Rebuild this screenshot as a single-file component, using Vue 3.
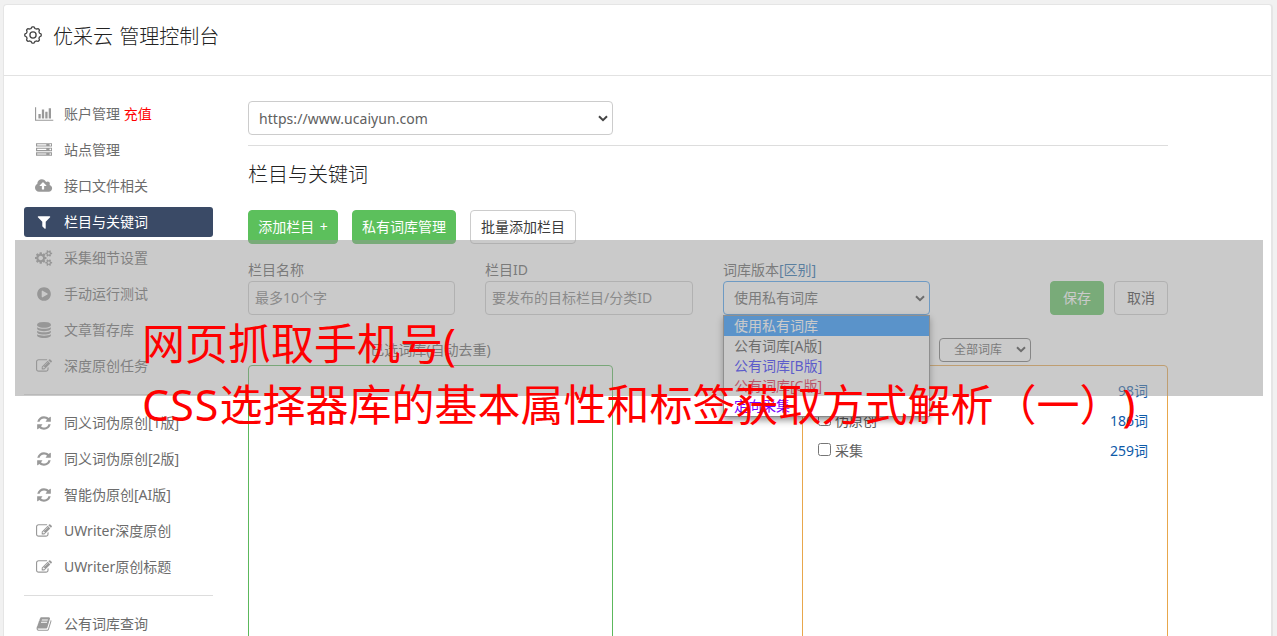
<script setup>
const icons = {
  chart: { w: 2048, d: 'M640 896v512h-256v-512h256zm384-512v1024h-256v-1024h256zm1024 1152v128h-2048v-1536h128v1408h1920zm-640-896v768h-256v-768h256zm384-384v1152h-256v-1152h256z' },
  server: { w: 1792, d: 'M128 1408h1024v-128h-1024v128zm0-512h1024v-128h-1024v128zm1568 448q0-40-28-68t-68-28-68 28-28 68 28 68 68 28 68-28 28-68zm-1568-960h1024v-128h-1024v128zm1568 448q0-40-28-68t-68-28-68 28-28 68 28 68 68 28 68-28 28-68zm0-512q0-40-28-68t-68-28-68 28-28 68 28 68 68 28 68-28 28-68zm96 832v384h-1792v-384h1792zm0-512v384h-1792v-384h1792zm0-512v384h-1792v-384h1792z' },
  cloud: { w: 1920, d: 'M1280 864q0-14-9-23l-352-352q-9-9-23-9t-23 9l-351 351q-10 12-10 24 0 14 9 23t23 9h224v352q0 13 9.5 22.5t22.5 9.5h192q13 0 22.5-9.5t9.5-22.5v-352h224q13 0 22.5-9.5t9.5-22.5zm640 288q0 159-112.5 271.5t-271.5 112.5h-1088q-185 0-316.5-131.5t-131.5-316.5q0-130 70-240t188-165q-2-30-2-43 0-212 150-362t362-150q156 0 285.5 87t188.5 231q71-62 166-62 106 0 181 75t75 181q0 76-41 138 130 31 213.5 135.5t83.5 238.5z' },
  filter: { w: 1792, d: 'M1595 295q17 41-14 70l-493 493v742q0 42-39 59-13 5-25 5-27 0-45-19l-256-256q-19-19-19-45v-486l-493-493q-31-29-14-70 17-39 59-39h1280q42 0 59 39z' },
  cogs: { w: 1920, d: 'M896 896q0-106-75-181t-181-75-181 75-75 181 75 181 181 75 181-75 75-181zm768 512q0-52-38-90t-90-38-90 38-38 90q0 53 37.5 90.5t90.5 37.5 90.5-37.5 37.5-90.5zm0-1024q0-52-38-90t-90-38-90 38-38 90q0 53 37.5 90.5t90.5 37.5 90.5-37.5 37.5-90.5zm-384 421v185q0 10-7 19.5t-16 10.5l-155 24q-11 35-32 76 34 48 90 115 7 11 7 20 0 12-7 19-23 30-82.5 89.5t-78.5 59.5q-11 0-21-7l-115-90q-37 19-77 31-11 108-23 155-7 24-30 24h-186q-11 0-20-7.5t-10-17.5l-23-153q-34-10-75-31l-118 89q-7 7-20 7-11 0-21-8-144-133-144-160 0-9 7-19 10-14 41-53t47-61q-23-44-35-82l-152-24q-10-1-17-9.500t-7-19.500v-185q0-10 7-19.500t16-10.500l155-24q11-35 32-76-34-48-90-115-7-11-7-20 0-12 7-20 22-30 82-89t79-59q11 0 21 7l115 90q34-18 77-32 11-108 23-154 7-24 30-24h186q11 0 20 7.5t10 17.5l23 153q34 10 75 31l118-89q8-7 20-7 11 0 21 8 144 133 144 160 0 8-7 19-12 16-42 54t-45 60q23 48 34 82l152 23q10 2 17 10.5t7 19.5zm640 533v140q0 16-149 31-12 27-30 52 51 113 51 138 0 4-4 7-122 71-124 71-8 0-46-47t-52-68q-20 2-30 2t-30-2q-14 21-52 68t-46 47q-2 0-124-71-4-3-4-7 0-25 51-138-18-25-30-52-149-15-149-31v-140q0-16 149-31 13-29 30-52-51-113-51-138 0-4 4-7 4-2 35-20t59-34 30-16q8 0 46 46.5t52 67.5q20-2 30-2t30 2q51-71 92-112l6-2q4 0 124 70 4 3 4 7 0 25-51 138 17 23 30 52 149 15 149 31zm0-1024v140q0 16-149 31-12 27-30 52 51 113 51 138 0 4-4 7-122 71-124 71-8 0-46-47t-52-68q-20 2-30 2t-30-2q-14 21-52 68t-46 47q-2 0-124-71-4-3-4-7 0-25 51-138-18-25-30-52-149-15-149-31v-140q0-16 149-31 13-29 30-52-51-113-51-138 0-4 4-7 4-2 35-20t59-34 30-16q8 0 46 46.5t52 67.5q20-2 30-2t30 2q51-71 92-112l6-2q4 0 124 70 4 3 4 7 0 25-51 138 17 23 30 52 149 15 149 31z' },
  play: { w: 1792, d: 'M896 128q209 0 385.5 103t279.5 279.5 103 385.5-103 385.5-279.5 279.5-385.5 103-385.5-103-279.5-279.5-103-385.5 103-385.5 279.5-279.5 385.5-103zm384 823q32-18 32-55t-32-55l-544-320q-31-19-64-1-32 19-32 56v640q0 37 32 56 16 8 32 8 17 0 32-9z' },
  database: { w: 1792, d: 'M896 768q237 0 443-43t325-127v170q0 69-103 128t-280 93.5-385 34.5-385-34.5-280-93.5-103-128v-170q119 84 325 127t443 43zm0 768q237 0 443-43t325-127v170q0 69-103 128t-280 93.5-385 34.5-385-34.5-280-93.5-103-128v-170q119 84 325 127t443 43zm0-384q237 0 443-43t325-127v170q0 69-103 128t-280 93.5-385 34.5-385-34.5-280-93.5-103-128v-170q119 84 325 127t443 43zm0-1152q208 0 385 34.5t280 93.5 103 128v128q0 69-103 128t-280 93.5-385 34.5-385-34.5-280-93.5-103-128v-128q0-69 103-128t280-93.5 385-34.5z' },
  edit: { w: 1792, d: 'M888 1184l116-116-152-152-116 116v56h96v96h56zm440-720q-16-16-33 1l-350 350q-17 17-1 33t33-1l350-350q17-17 1-33zm80 594v190q0 119-84.5 203.5t-203.500 84.500h-832q-119 0-203.500-84.500t-84.500-203.500v-832q0-119 84.500-203.500t203.500-84.500h832q63 0 117 25 15 7 18 23 3 17-9 29l-49 49q-14 14-32 8-23-6-45-6h-832q-66 0-113 47t-47 113v832q0 66 47 113t113 47h832q66 0 113-47t47-113v-126q0-13 9-22l64-64q15-15 35-7t20 29zm-96-738l288 288-672 672h-288v-288zm444 132l-92 92-288-288 92-92q28-28 68-28t68 28l152 152q28 28 28 68t-28 68z' },
  refresh: { w: 1792, d: 'M1639 1056q0 5-1 7-64 268-268 434.5t-478 166.5q-146 0-282.5-55t-243.500-157l-129 129q-19 19-45 19t-45-19-19-45v-448q0-26 19-45t45-19h448q26 0 45 19t19 45-19 45l-137 137q71 66 161 102t187 36q134 0 250-65t186-179q11-17 53-117 8-23 30-23h192q13 0 22.500 9.500t9.500 22.500zm25-800v448q0 26-19 45t-45 19h-448q-26 0-45-19t-19-45 19-45l138-138q-148-137-349-137-134 0-250 65t-186 179q-11 17-53 117-8 23-30 23h-199q-13 0-22.500-9.500t-9.500-22.500v-7q65-268 270-434.500t480-166.500q146 0 284 55.500t245 156.500l130-129q19-19 45-19t45 19 19 45z' },
  book: { w: 1792, d: 'M1703 478q40 57 18 129l-275 906q-19 64-76.500 107.500t-122.500 43.500h-923q-77 0-148.500-53.500t-99.500-131.500q-24-67-2-127 0-4 3-27t4-37q1-8-3-21.500t-3-19.500q2-11 8-21t16.500-23.500 16.500-23.500q23-38 45-91.500t30-91.500q3-10 .5-30t-.5-28q3-11 17-28t17-23q21-36 42-92t25-90q1-9-2.500-32t.5-28q4-13 22-30.500t22-22.500q19-26 42.500-84.500t27.500-96.500q1-8-3-25.500t-2-26.500q2-8 9-18t18-23 17-21q8-12 16.500-30.500t15-35 16-36 19.500-32 26.500-23.500 36-11.500 47.500 5.500l-1 3q38-9 51-9h761q74 0 114 56t18 130l-274 906q-36 119-71.500 153.500t-128.500 34.500h-869q-27 0-38 15-11 16-1 43 24 70 144 70h923q29 0 56-15.500t35-41.500l300-987q7-22 5-57 38 15 59 43zm-1064 2q-4 13 2 22.500t20 9.500h608q13 0 25.500-9.500t16.500-22.500l21-64q4-13-2-22.500t-20-9.500h-608q-13 0-25.500 9.500t-16.500 22.500zm-83 256q-4 13 2 22.500t20 9.500h608q13 0 25.500-9.500t16.500-22.500l21-64q4-13-2-22.500t-20-9.500h-608q-13 0-25.500 9.500t-16.500 22.500z' },
}

const groups = [
  [
    { icon: 'chart', text: '账户管理', extra: '充值' },
    { icon: 'server', text: '站点管理' },
    { icon: 'cloud', text: '接口文件相关' },
    { icon: 'filter', text: '栏目与关键词', active: true },
    { icon: 'cogs', text: '采集细节设置' },
    { icon: 'play', text: '手动运行测试' },
    { icon: 'database', text: '文章暂存库' },
    { icon: 'edit', text: '深度原创任务' },
  ],
  [
    { icon: 'refresh', text: '同义词伪原创[1版]' },
    { icon: 'refresh', text: '同义词伪原创[2版]' },
    { icon: 'refresh', text: '智能伪原创[AI版]' },
    { icon: 'edit', text: 'UWriter深度原创' },
    { icon: 'edit', text: 'UWriter原创标题' },
  ],
  [{ icon: 'book', text: '公有词库查询' }],
]

const options = [
  { text: '使用私有词库', tone: 'picked' },
  { text: '公有词库[A版]', tone: 'plain' },
  { text: '公有词库[B版]', tone: 'blue' },
  { text: '公有词库[C版]', tone: 'crimson' },
  { text: '定向采集', tone: 'violet' },
]

const words = [
  { name: '', count: '98词' },
  { name: '伪原创', count: '186词' },
  { name: '采集', count: '259词' },
]

// Scalloped gear outline with eight teeth
const gear = Array.from({ length: 96 }, (_, i) => {
  const a = (i / 96) * Math.PI * 2
  const r = 7.5 + 0.75 * Math.tanh(2 * Math.cos(8 * a))
  return `${i ? 'L' : 'M'}${(9 + r * Math.cos(a)).toFixed(2)} ${(9 + r * Math.sin(a)).toFixed(2)}`
}).join('') + 'Z'
</script>

<template>
  <div class="page">
    <div class="card">
      <header class="head">
        <svg class="gear" viewBox="0 0 18 18"><path :d="gear" /><circle cx="9" cy="9" r="3.1" /></svg>
        <h1>优采云 管理控制台</h1>
      </header>
      <div class="body">
        <nav class="side">
          <ul v-for="(g, gi) in groups" :key="gi" class="group">
            <li v-for="item in g" :key="item.text" class="item" :class="{ active: item.active }">
              <span class="icon-box">
                <svg class="icon" :viewBox="`0 0 ${icons[item.icon].w} 1792`"><path :d="icons[item.icon].d" /></svg>
              </span>
              <span>{{ item.text }} <b v-if="item.extra">{{ item.extra }}</b></span>
            </li>
          </ul>
        </nav>
        <main class="main">
          <div class="select site">
            <span>https://www.ucaiyun.com</span>
            <svg class="chev" viewBox="0 0 10 7"><path d="M1 1.2l4 4 4-4" /></svg>
          </div>
          <h2>栏目与关键词</h2>
          <div class="actions">
            <button class="btn green add">添加栏目 +</button>
            <button class="btn green">私有词库管理</button>
            <button class="btn">批量添加栏目</button>
          </div>
          <div class="form">
            <div class="field"><label>栏目名称</label><div class="input">最多10个字</div></div>
            <div class="field"><label>栏目ID</label><div class="input">要发布的目标栏目/分类ID</div></div>
            <div class="field">
              <label>词库版本<a>[区别]</a></label>
              <div class="select focus">
                <span>使用私有词库</span>
                <svg class="chev" viewBox="0 0 10 7"><path d="M1 1.2l4 4 4-4" /></svg>
              </div>
              <ul class="popup">
                <li v-for="o in options" :key="o.text" :class="o.tone">{{ o.text }}</li>
              </ul>
            </div>
            <div class="submit">
              <button class="btn green">保存</button>
              <button class="btn">取消</button>
            </div>
          </div>
          <div class="lists">
            <section class="list">
              <div class="list-head">已选词库(自动去重)</div>
              <div class="box chosen"></div>
            </section>
            <section class="list">
              <div class="list-head">
                <div class="select mini">
                  <span>全部词库</span>
                  <svg class="chev" viewBox="0 0 10 7"><path d="M1 1.2l4 4 4-4" /></svg>
                </div>
              </div>
              <div class="box source">
                <div v-for="w in words" :key="w.count" class="row">
                  <i class="check"></i><span>{{ w.name }}</span><em>{{ w.count }}</em>
                </div>
              </div>
            </section>
          </div>
        </main>
      </div>
    </div>
    <div class="band"></div>
    <div class="caption">
      <div>网页抓取手机号(</div>
      <div><span class="latin">CSS</span>选择器库的基本属性和标签获取方式解析<span class="wide" lang="zh-Hant">（一）</span>)</div>
    </div>
  </div>
</template>

<style>
body { background: #f1f1f1; overflow: hidden; }
</style>

<style scoped>
* { box-sizing: border-box; }
.page {
  position: relative;
  height: 636px;
  overflow: hidden;
  padding: 4px 4px 0 3px;
  font: 400 14px/20px "Noto Sans", "Noto Sans CJK SC", sans-serif;
  color: #606060;
}
.card { height: 660px; background: #fff; border: 1px solid #e5e5e5; border-right-width: 2px; border-radius: 4px; }
.head { height: 71px; display: flex; align-items: center; padding: 0 0 7px 20px; border-bottom: 1px solid #e2e2e2; color: #333; }
.gear { width: 18px; height: 18px; margin: 0 11px 4px 0; fill: none; stroke: #444; stroke-width: 1.3; }
h1, h2 { margin: 0; font-size: 20px; line-height: 28px; font-weight: 300; color: #222; }
h1 { word-spacing: 1px; }
.body { display: flex; padding: 23px 0 0 20px; }
.side { width: 189px; margin-right: 35px; }
ul { list-style: none; margin: 0; padding: 0; }
.group { display: flex; flex-direction: column; gap: 6px; }
.group + .group { border-top: 1px solid #ddd; margin-top: 13px; padding-top: 13px; }
.item { height: 30px; display: flex; align-items: center; border-radius: 3px; color: #6c6c6c; white-space: nowrap; }
.item.active { background: #3a4a66; color: #fff; }
.item b { color: #f00; font-weight: 400; }
.icon-box { width: 40px; display: flex; justify-content: center; flex: none; }
.icon { height: 16px; fill: #999; overflow: visible; }
.active .icon { fill: #fff; }
.main { width: 920px; padding-top: 2px; }
.select, .input { height: 34px; display: flex; align-items: center; border: 1px solid #ccc; border-radius: 4px; white-space: nowrap; }
.select { justify-content: space-between; padding: 0 4px 0 10px; }
.input { padding-left: 6px; color: #808080; }
.chev { width: 10px; height: 7px; fill: none; stroke: #444; stroke-width: 2; }
.site { width: 365px; letter-spacing: .05px; padding-top: 1px; }
.main h2 { border-top: 1px solid #ddd; margin-top: 10px; padding-top: 15px; }
.actions { display: flex; gap: 14px; margin-top: 21px; }
.btn { height: 34px; padding: 0 10px; border: 1px solid #ccc; border-radius: 4px; background: #fff; color: #3c3c3c; font: inherit; white-space: nowrap; }
.btn.green { background: #5cc05c; border-color: #5cc05c; color: #fff; }
.actions .green { width: 104px; padding: 0; }
.actions .add { width: 90px; word-spacing: 2px; }
.form { display: grid; grid-template-columns: 207px 208px 207px 1fr; column-gap: 30px; margin-top: 16px; }
.field { position: relative; }
label { display: block; height: 21px; line-height: 20px; }
label a { color: #1c68a8; }
.focus { border-color: #469ff0; }
.popup { position: absolute; z-index: 2; top: 55px; left: 0; width: 207px; height: 102px; background: #fff; border: 1px solid #888; box-shadow: 0 3px 7px rgba(0, 0, 0, .45); }
.popup li { height: 20px; padding-left: 10px; }
.popup .picked { background: #1e90ff; color: #fff; }
.plain { color: #444; }
.blue { color: #22f; }
.crimson { color: crimson; }
.violet { color: #70f; }
.submit { display: flex; gap: 10px; justify-content: flex-end; padding-top: 21px; }
.submit .btn { width: 54px; padding: 0; }
.lists { display: flex; justify-content: space-between; margin-top: 20px; }
.list { width: 365px; }
.list:last-child { width: 366px; }
.list-head { height: 30px; display: flex; justify-content: center; align-items: center; }
.mini { width: 92px; height: 24px; margin: 0 0 1px 0; border-color: #767676; font-size: 12px; padding: 0 4px 0 14px; }
.box { height: 330px; border: 1px solid #5cb85c; border-radius: 4px; }
.source { border-color: #e8a74c; padding: 10px 19px 0 15px; }
.row { height: 30px; display: flex; align-items: center; }
.row em { margin-left: auto; font-style: normal; color: #0e5aa8; }
.check { width: 13px; height: 13px; margin: 0 4px 3px 0; border: 1px solid #767676; border-radius: 2.5px; }
.band { position: absolute; z-index: 3; left: 15px; top: 240px; width: 1248px; height: 156px; background: rgba(150, 150, 150, .5); }
.caption { position: absolute; z-index: 4; left: 142px; top: 314px; font-size: 43px; line-height: 60px; color: #f00; white-space: nowrap; text-spacing-trim: space-all; }
.caption div + div { margin-top: -2px; }
.latin { letter-spacing: 1px; }
.wide { font-family: "Noto Sans CJK TC", sans-serif; }
</style>
